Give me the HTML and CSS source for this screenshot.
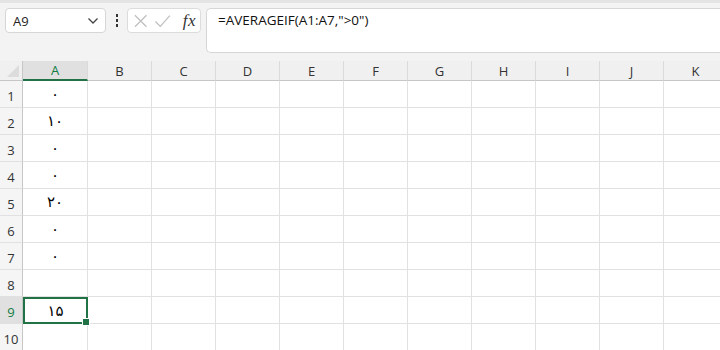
FILE: index.html
```html
<!DOCTYPE html>
<html>
<head>
	<meta charset="utf-8"/>
	<title>Book1</title>
	<link rel="stylesheet" href="styles.css">
</head>
<body>
	<div class="top">
		<div class="namebox">
			<span>A9</span>
			<svg width="12" height="8" viewBox="0 0 12 8"><path d="M1.5 1.5 L6 6 L10.5 1.5" fill="none" stroke="#444" stroke-width="1.3"/></svg>
		</div>
		<div class="dots"><i></i><i></i><i></i></div>
		<div class="fxbox">
			<svg width="16" height="16" viewBox="0 0 16 16"><path d="M2 2 L14 14 M14 2 L2 14" stroke="#bdbdbd" stroke-width="1.2"/></svg>
			<svg width="18" height="16" viewBox="0 0 18 16"><path d="M1.5 8.5 L6.5 13.5 L16.5 2.5" fill="none" stroke="#bdbdbd" stroke-width="1.2"/></svg>
			<span class="fx">fx</span>
		</div>
		<div class="formula">=AVERAGEIF(A1:A7,"&gt;0")</div>
	</div>

	<div class="sheet">
		<div class="corner"><div class="tri"></div></div>
		<div class="ch sel">A</div>
		<div class="ch">B</div>
		<div class="ch">C</div>
		<div class="ch">D</div>
		<div class="ch">E</div>
		<div class="ch">F</div>
		<div class="ch">G</div>
		<div class="ch">H</div>
		<div class="ch">I</div>
		<div class="ch">J</div>
		<div class="ch">K</div>
	</div>
	<div class="sheet" id="rows"></div>

	<script type="text/javascript">
		var vals = ['۰', '۱۰', '۰', '۰', '۲۰', '۰', '۰', '', '۱۵', ''];
		var rows = document.getElementById('rows');
		var html = '';
		for (var r = 0; r < vals.length; r++) {
			var sel = r === 8;
			html += '<div class="rh' + (sel ? ' sel' : '') + '">' + (r + 1) + '</div>';
			html += '<div class="c num' + (sel ? ' active' : '') + '">' + vals[r] + (sel ? '<b class="handle"></b>' : '') + '</div>';
			for (var c = 0; c < 10; c++) html += '<div class="c"></div>';
		}
		rows.innerHTML = html;
	</script>
</body>
</html>
```

FILE: styles.css
```css
html, body{height: 100%;}
body{margin: 0; background: #f3f3f3; font-family: "Open Sans", "Noto Sans", sans-serif; overflow: hidden;}

.top{display: flex; align-items: flex-start; height: 61px; box-sizing: border-box; padding: 5px 0 0 5px; border-top: 3px solid #e4e4e4;}
.namebox{width: 101px; height: 25px; box-sizing: border-box; background: #fff; border: 1px solid #d6d6d6; border-radius: 4px;
	display: flex; align-items: center; justify-content: space-between; padding: 0 6px 0 7px; font-size: 13px; color: #222;}
.dots{width: 21px; height: 25px; display: flex; flex-direction: column; align-items: center; justify-content: center; gap: 2px;}
.dots i{width: 2px; height: 3px; background: #333; display: block;}
.fxbox{width: 74px; height: 25px; box-sizing: border-box; background: #fff; border: 1px solid #dcdcdc; border-radius: 4px;
	display: flex; align-items: center; padding: 0 4px 0 5px; gap: 6px;}
.fx{font-family: "Liberation Serif", serif; font-style: italic; font-size: 17px; color: #333; margin-left: 5px; letter-spacing: 0.5px;}
.formula{flex: 1; margin-left: 5px; height: 45px; box-sizing: border-box; background: #fff; border: 1px solid #d6d6d6; border-right: none;
	border-radius: 5px 0 0 5px; padding: 2px 0 0 11px; font-size: 13.5px; color: #111;}

.sheet{display: grid; grid-template-columns: 23px 65px repeat(10, 64px); width: 720px; overflow: hidden;}
.corner, .ch{height: 20px; box-sizing: border-box; background: #f0f0f0; border-right: 1px solid #dadada; border-bottom: 1px solid #c6c6c6;}
.corner{position: relative; border-right-color: #c6c6c6;}
.tri{position: absolute; right: 3px; bottom: 3px; width: 0; height: 0; border-left: 12px solid transparent; border-bottom: 12px solid #dcdcdc;}
.ch{display: flex; align-items: center; justify-content: center; font-size: 13px; color: #333;}
.ch.sel{background: #e0e0e0; color: #107c41; border-bottom: 2px solid #217346;}

.rh{height: 27px; box-sizing: border-box; background: #f5f5f5; border-right: 1px solid #c6c6c6; border-bottom: 1px solid #e1e1e1;
	display: flex; align-items: flex-end; justify-content: center; padding-bottom: 2px; font-size: 13px; color: #333;}
.rh.sel{background: #e0e0e0; color: #107c41;}
.c{height: 27px; box-sizing: border-box; background: #fff; border-right: 1px solid #e1e1e1; border-bottom: 1px solid #e1e1e1;}
.num{display: flex; align-items: center; justify-content: center; font-family: "DejaVu Sans", sans-serif; font-size: 15px; color: #000;}
.active{position: relative; border: 2px solid #217346;}
.handle{position: absolute; right: -4px; bottom: -4px; width: 6px; height: 6px; background: #217346; border: 1px solid #fff;}
```
